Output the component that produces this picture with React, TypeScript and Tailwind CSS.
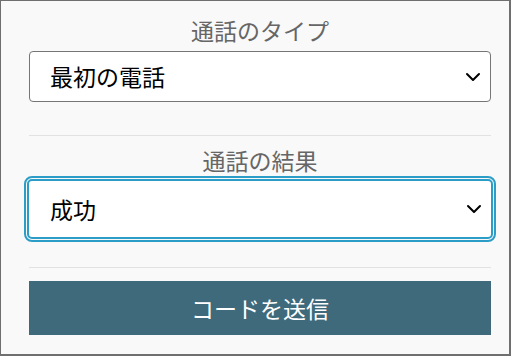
import { ChevronDown } from 'lucide-react';

interface SelectBoxProps {
  value: string;
  focused?: boolean;
}

function SelectBox({ value, focused }: SelectBoxProps) {
  if (focused) {
    return (
      <div className="-mx-[2px] mt-[5px] h-[60px] flex items-center justify-between rounded-[5px] border-2 border-[#2b9dc6] bg-white pl-[21px] pr-[5px] outline-2 outline-offset-1 outline-[#2b9dc6]">
        <span className="text-[23px] text-black">{value}</span>
        <ChevronDown className="w-6 h-6 text-black" strokeWidth={2} />
      </div>
    );
  }
  return (
    <div className="mt-[7px] h-[51px] flex items-center justify-between rounded-[4px] border border-[#767676] bg-white pl-[20px] pr-[5px]">
      <span className="text-[23px] text-black">{value}</span>
      <ChevronDown className="w-6 h-6 text-black" strokeWidth={2} />
    </div>
  );
}

export default function App() {
  return (
    <div
      className="w-[511px] h-[356px] border-l border-t border-r-2 border-b-2 border-[#6f6f6f] bg-[#f9f9f9] pl-[28px] pr-[18px] pt-[15px]"
      style={{ fontFamily: '"Noto Sans CJK JP", "Noto Sans", sans-serif' }}
    >
      <div className="w-[462px] flex flex-col">
        <div className="h-[28px] leading-[28px] text-center text-[23px] text-[#666666]">通話のタイプ</div>
        <SelectBox value="最初の電話" />

        <div className="mt-[33px] h-px bg-[#e2e2e2]" />

        <div className="mt-[10px] h-[28px] leading-[28px] text-center text-[23px] text-[#666666]">通話の結果</div>
        <SelectBox value="成功" focused />

        <div className="mt-[28px] h-px bg-[#e2e2e2]" />

        <button className="mt-[13px] h-[54px] w-full bg-[#3e6a7c] text-white text-[23px]">
          コードを送信
        </button>
      </div>
    </div>
  );
}
